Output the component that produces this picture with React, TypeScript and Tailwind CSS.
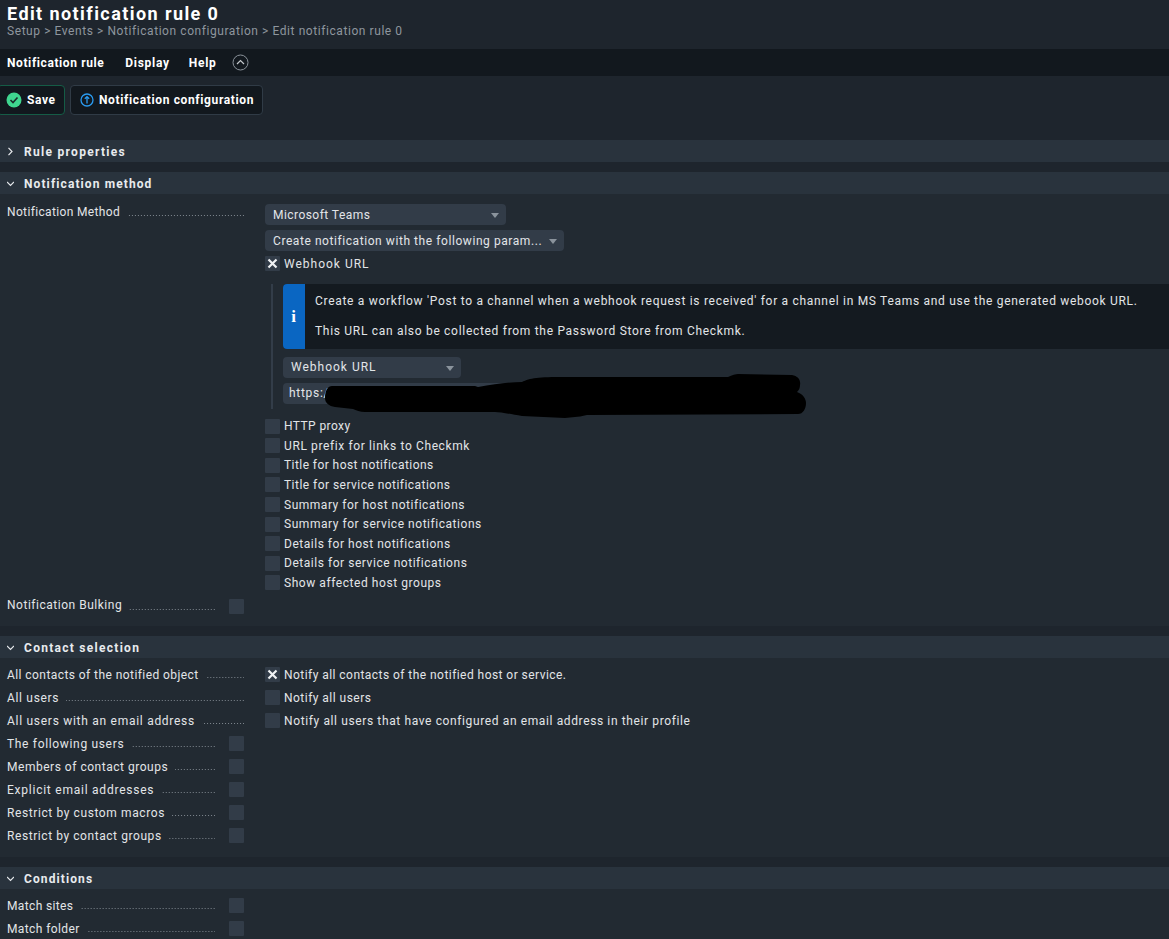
import React from "react";

const Check = ({ on = false }: { on?: boolean }) => (
  <span className="flex h-[15px] w-[15px] shrink-0 items-center justify-center rounded-[1px] bg-[#323c48]">
    {on && (
      <svg width="11" height="11" viewBox="0 0 11 11">
        <path d="M1.5 1.5 L9.5 9.5 M9.5 1.5 L1.5 9.5" stroke="#f0f2f4" strokeWidth="2.2" fill="none" />
      </svg>
    )}
  </span>
);

const CheckRow = ({ text, on = false, h = "h-[19.6px]", t = "" }: { text: string; on?: boolean; h?: string; t?: string }) => (
  <div className={`flex items-center gap-[4px] ${h}`}>
    <Check on={on} />
    <span className={t}>{text}</span>
  </div>
);

const Select = ({ text, w, t = "" }: { text: string; w: string; t?: string }) => (
  <div className={`flex h-[21px] items-center justify-between rounded-[4px] bg-[#323c48] pl-[8px] pr-[7px] ${w}`}>
    <span className={`whitespace-nowrap ${t}`}>{text}</span>
    <svg width="8" height="5" viewBox="0 0 8 5" className="mt-[2px] shrink-0">
      <path d="M0 0 H8 L4 5 Z" fill="#8a939c" />
    </svg>
  </div>
);

const Leader = ({ text, end = false, t = "" }: { text: string; end?: boolean; t?: string }) => (
  <div className={`flex shrink-0 items-center gap-[7px] pl-[7px] ${end ? "w-[244px]" : "w-[215px]"}`}>
    <span className={`whitespace-nowrap ${t}`}>{text}</span>
    <span className="mt-[6px] h-[1px] flex-1 bg-[linear-gradient(to_left,#7f878f_1px,transparent_1px)] bg-[length:3px_1px] bg-repeat-x bg-right" />
  </div>
);

const Section = ({ title, open = true, t = "tracking-[1.1px]", children }: { title: string; open?: boolean; t?: string; children?: React.ReactNode }) => (
  <section className="mb-[10px]">
    <div className="flex h-[22px] items-center bg-[#29333d] pl-[7px]">
      <svg width="7" height="9" viewBox="0 0 7 9" className="w-[7px]">
        {open ? (
          <path d="M0 3 L3.5 6.5 L7 3" stroke="#e6e9ec" strokeWidth="1.2" fill="none" />
        ) : (
          <path d="M1.5 0.8 L5 4.5 L1.5 8.2" stroke="#e6e9ec" strokeWidth="1.2" fill="none" />
        )}
      </svg>
      <span className={`ml-[10px] pt-[1px] font-bold text-[#e8ebee] ${t}`}>{title}</span>
    </div>
    {children}
  </section>
);

const SimpleRow = ({ text, t = "" }: { text: string; t?: string }) => (
  <div className="flex h-[23px] items-center">
    <Leader text={text} t={t} />
    <span className="ml-[14px]">
      <Check />
    </span>
  </div>
);

const ContactRow = ({ label, text, on = false, lt = "", t = "" }: { label: string; text: string; on?: boolean; lt?: string; t?: string }) => (
  <div className="flex h-[23px] items-center">
    <Leader text={label} end t={lt} />
    <div className="ml-[21px]">
      <CheckRow text={text} on={on} h="h-[23px]" t={t} />
    </div>
  </div>
);

export default function App() {
  const opts = [
    { s: "HTTP proxy", t: "tracking-[0.42px]" },
    { s: "URL prefix for links to Checkmk", t: "tracking-[0.62px]" },
    { s: "Title for host notifications", t: "tracking-[0.43px]" },
    { s: "Title for service notifications", t: "tracking-[0.46px]" },
    { s: "Summary for host notifications", t: "tracking-[0.52px]" },
    { s: "Summary for service notifications", t: "tracking-[0.54px]" },
    { s: "Details for host notifications", t: "tracking-[0.52px]" },
    { s: "Details for service notifications", t: "tracking-[0.54px]" },
    { s: "Show affected host groups", t: "tracking-[0.56px]" },
  ];
  return (
    <div className="h-[939px] w-[1169px] overflow-hidden bg-[#1e252d] font-['Roboto','Liberation_Sans',sans-serif] text-[12px] leading-[14px] tracking-[0.72px] text-[#e2e5e8]">
      <header className="h-[49px] pl-[7px] pt-[3px]">
        <h1 className="text-[18px] font-bold leading-[21px] tracking-[1.42px] text-white">Edit notification rule 0</h1>
        <div className="leading-[14px] tracking-[0.57px] text-[#8e969e]">Setup &gt; Events &gt; Notification configuration &gt; Edit notification rule 0</div>
      </header>
      <nav className="flex h-[27px] items-center bg-[#12181e] pl-[7px] font-bold text-white">
        <span className="tracking-[0.6px]">Notification rule</span>
        <span className="ml-[21px]">Display</span>
        <span className="ml-[19px]">Help</span>
        <svg width="17" height="17" viewBox="0 0 17 17" className="ml-[15px]">
          <circle cx="8.5" cy="8.5" r="7.5" stroke="#8a929a" strokeWidth="1" fill="none" />
          <path d="M5 10 L8.5 6.5 L12 10" stroke="#c4c8cc" strokeWidth="1.2" fill="none" />
        </svg>
      </nav>
      <div className="flex h-[64px] items-start gap-[5px] pt-[9px]">
        <button className="ml-[-3px] flex h-[30px] w-[68px] items-center rounded-[4px] border border-[#155c46] bg-[#12181e] pl-[8px] font-bold tracking-[0.6px] text-white">
          <svg width="16" height="16" viewBox="0 0 16 16">
            <circle cx="8" cy="8" r="7.5" fill="#3fd68f" />
            <path d="M4.5 8 L7 10.5 L11.5 5.5" stroke="#1b2a2a" strokeWidth="1.6" fill="none" />
          </svg>
          <span className="ml-[5px]">Save</span>
        </button>
        <button className="flex h-[30px] w-[193px] items-center rounded-[4px] border border-[#303b46] bg-[#12181e] pl-[9px] font-bold tracking-[0.64px] text-white">
          <svg width="14" height="14" viewBox="0 0 14 14">
            <circle cx="7" cy="7" r="6" stroke="#2a9bf0" strokeWidth="1.3" fill="none" />
            <path d="M7 10.5 V4 M4.8 5.8 L7 3.6 L9.2 5.8" stroke="#2a9bf0" strokeWidth="1.3" fill="none" />
          </svg>
          <span className="ml-[5px]">Notification configuration</span>
        </button>
      </div>

      <Section title="Rule properties" open={false} t="tracking-[1.3px]" />

      <Section title="Notification method">
        <div className="h-[432px] bg-[#222a32] pt-[10px]">
          <div className="flex">
            <div className="pt-[1px]">
              <Leader text="Notification Method" end t="tracking-[0.35px]" />
            </div>
            <div className="ml-[21px] flex-1">
              <Select text="Microsoft Teams" w="w-[241px]" t="tracking-[0.45px]" />
              <div className="mt-[5px]">
                <Select text="Create notification with the following param..." w="w-[299px]" t="tracking-[0.57px]" />
              </div>
              <div className="mt-[3px]">
                <CheckRow text="Webhook URL" on h="h-[19px]" t="tracking-[1px]" />
              </div>
              <div className="relative mt-[11px] ml-[6px] h-[125px] border-l-2 border-[#333d49] pl-[10px]">
                <div className="flex h-[65px] overflow-hidden rounded-l-[4px] bg-[#141a20]">
                  <div className="flex w-[22px] items-center justify-center bg-[#0a66c2]">
                    <span className="font-['Liberation_Serif',serif] text-[17px] font-bold text-white">i</span>
                  </div>
                  <div className="whitespace-nowrap pl-[10px] pt-[10px] leading-[15px] tracking-[0.7px]">
                    <div>Create a workflow 'Post to a channel when a webhook request is received' for a channel in MS Teams and use the generated webook URL.</div>
                    <div className="mt-[15px]">This URL can also be collected from the Password Store from Checkmk.</div>
                  </div>
                </div>
                <div className="mt-[8px]">
                  <Select text="Webhook URL" w="w-[178px]" t="pb-[2px] tracking-[1px]" />
                </div>
                <div className="mt-[5px] flex h-[21px] w-[400px] items-center rounded-[4px] bg-[#323c48] pb-[2px] pl-[6px]">https://</div>
                <svg width="490" height="50" viewBox="0 0 490 50" className="absolute left-[47px] top-[86px]">
                  <path
                    d="M5 28 C5 20 8 16 12 16 L155 16 L158 17 C175 14 190 12 202 12 C210 8 218 7 245 7 L408 7 C412 5 416 4 418 4 L472 5 C478 6 481 10 480 15 C480 18 479 20 477 22 C483 24 486 29 486 33 C486 39 483 44 478 44 L267 45 C262 46 258 47 255 47 L245 48 L202 46 C190 44 180 42 175 42 L45 42 C40 42 36 40 33 39 L15 37 C9 36 5 33 5 28 Z"
                    fill="#000"
                  />
                </svg>
              </div>
              <div className="mt-[7.4px]">
                {opts.map((o) => (
                  <CheckRow key={o.s} text={o.s} t={o.t} />
                ))}
              </div>
            </div>
          </div>
          <div className="mt-[2px]">
            <SimpleRow text="Notification Bulking" t="pb-[2px] tracking-[0.52px]" />
          </div>
        </div>
      </Section>

      <Section title="Contact selection" t="tracking-[1.28px]">
        <div className="h-[199px] bg-[#222a32] pt-[5px]">
          <ContactRow label="All contacts of the notified object" lt="tracking-[0.43px]" text="Notify all contacts of the notified host or service." t="tracking-[0.45px]" on />
          <ContactRow label="All users" lt="tracking-[0.68px]" text="Notify all users" t="tracking-[0.47px]" />
          <ContactRow label="All users with an email address" text="Notify all users that have configured an email address in their profile" t="tracking-[0.62px]" />
          <SimpleRow text="The following users" t="tracking-[0.67px]" />
          <SimpleRow text="Members of contact groups" t="tracking-[0.52px]" />
          <SimpleRow text="Explicit email addresses" t="tracking-[0.76px]" />
          <SimpleRow text="Restrict by custom macros" t="tracking-[0.6px]" />
          <SimpleRow text="Restrict by contact groups" t="tracking-[0.57px]" />
        </div>
      </Section>

      <Section title="Conditions">
        <div className="h-[60px] bg-[#222a32] pt-[5px]">
          <SimpleRow text="Match sites" t="tracking-[0.36px]" />
          <SimpleRow text="Match folder" t="tracking-[0.39px]" />
        </div>
      </Section>
    </div>
  );
}
